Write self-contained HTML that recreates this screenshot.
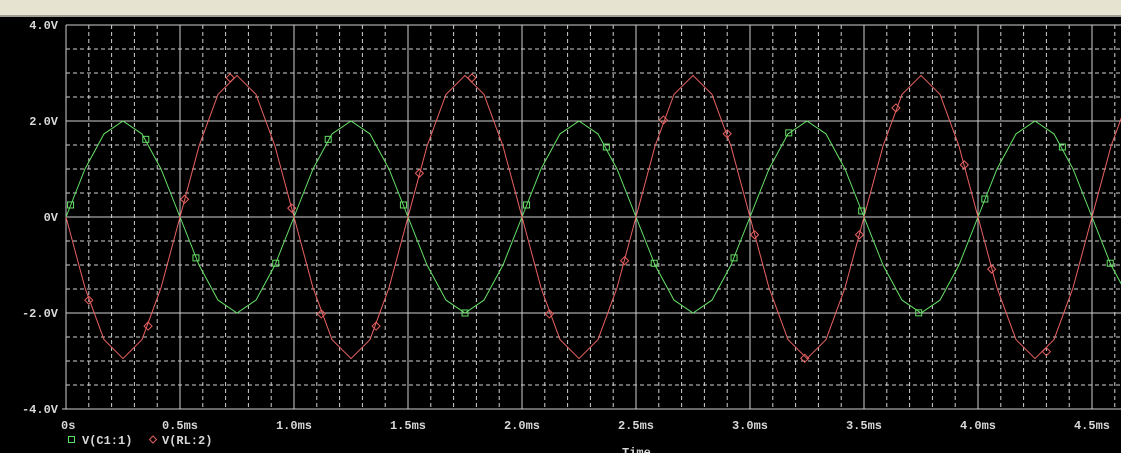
<!DOCTYPE html>
<html><head><meta charset="utf-8"><style>
html,body{margin:0;padding:0;width:1121px;height:453px;overflow:hidden;background:#000}
#top{position:absolute;left:0;top:0;width:1121px;height:15px;background:#e6e3d0;border-bottom:2px solid #a09c90}
svg{position:absolute;left:0;top:0}
text{font-family:"Liberation Mono",monospace;font-size:12px;fill:#d8d8d8;font-weight:bold}
</style></head><body>
<svg id="s" width="1121" height="453" xmlns="http://www.w3.org/2000/svg">
<rect x="0" y="17" width="1121" height="436" fill="#000"/>
<g id="grid"></g>
<g id="lab">
<text x="58" y="29" text-anchor="end">4.0V</text>
<text x="58" y="125" text-anchor="end">2.0V</text>
<text x="58" y="221" text-anchor="end">0V</text>
<text x="58" y="317" text-anchor="end">-2.0V</text>
<text x="58" y="413" text-anchor="end">-4.0V</text>
<text x="61" y="429">0s</text>
<text x="180" y="429" text-anchor="middle">0.5ms</text>
<text x="294" y="429" text-anchor="middle">1.0ms</text>
<text x="408" y="429" text-anchor="middle">1.5ms</text>
<text x="522" y="429" text-anchor="middle">2.0ms</text>
<text x="636" y="429" text-anchor="middle">2.5ms</text>
<text x="750" y="429" text-anchor="middle">3.0ms</text>
<text x="864" y="429" text-anchor="middle">3.5ms</text>
<text x="978" y="429" text-anchor="middle">4.0ms</text>
<text x="1092" y="429" text-anchor="middle">4.5ms</text>
<rect x="68.5" y="436.5" width="6" height="6" fill="none" stroke="#60e060"/>
<text x="82" y="444">V(C1:1)</text>
<path d="M153 436 L156.5 439.5 L153 443 L149.5 439.5Z" fill="none" stroke="#e06060"/>
<text x="162" y="444">V(RL:2)</text>
<text x="622" y="456">Time</text>
</g>
<g id="wave"></g>
</svg>
<div id="top"></div>
<script>
var ns="http://www.w3.org/2000/svg",g=document.getElementById('grid'),w=document.getElementById('wave');
function el(p,t,a){var e=document.createElementNS(ns,t);for(var k in a)e.setAttribute(k,a[k]);p.appendChild(e);return e;}
var X0=66,PX=228,Y0=217,PV=48,R=1121;
for(var i=0;i<=50;i++){var x=X0+i*PX/10;if(x>R)break;var solid=i%5==0;
el(g,'line',{x1:x,y1:25,x2:x,y2:409,stroke:'#cfcfcf','stroke-width':1,'stroke-dasharray':solid?'':'4,3'});}
for(var j=0;j<=16;j++){var y=25+j*24;var solid=j%4==0;
el(g,'line',{x1:X0,y1:y,x2:R,y2:y,stroke:'#cfcfcf','stroke-width':1,'stroke-dasharray':solid?'':'4,3'});}
el(g,'line',{x1:X0-4,y1:409,x2:X0,y2:409,stroke:'#cfcfcf'});
function pts(A){var s='';for(var k=0;k<=60;k++){var t=k/12;var x=X0+t*PX;var v=A*Math.sin(2*Math.PI*t);s+=x.toFixed(1)+','+(Y0-v*PV).toFixed(1)+' ';}return s;}
el(w,'polyline',{points:pts(2.0),fill:'none',stroke:'#66e066','stroke-width':1});
el(w,'polyline',{points:pts(-2.95),fill:'none',stroke:'#e86060','stroke-width':1});
var gm=[0.02,0.35,0.57,0.92,1.15,1.48,1.75,2.02,2.37,2.58,2.93,3.17,3.49,3.74,4.03,4.37,4.58];
gm.forEach(function(t){var x=X0+t*PX,y=Y0-2*Math.sin(2*Math.PI*t)*PV;el(w,'rect',{x:x-3,y:y-3,width:6,height:6,fill:'none',stroke:'#66e066'});});
var rm=[0.1,0.36,0.52,0.72,0.99,1.12,1.36,1.55,1.78,2.12,2.45,2.62,2.9,3.02,3.24,3.48,3.64,3.94,4.06,4.3];
rm.forEach(function(t){var x=X0+t*PX,y=Y0+2.95*Math.sin(2*Math.PI*t)*PV;el(w,'path',{d:'M'+x+' '+(y-4)+' L'+(x+4)+' '+y+' L'+x+' '+(y+4)+' L'+(x-4)+' '+y+'Z',fill:'none',stroke:'#e86060'});});
</script>
</body></html>
